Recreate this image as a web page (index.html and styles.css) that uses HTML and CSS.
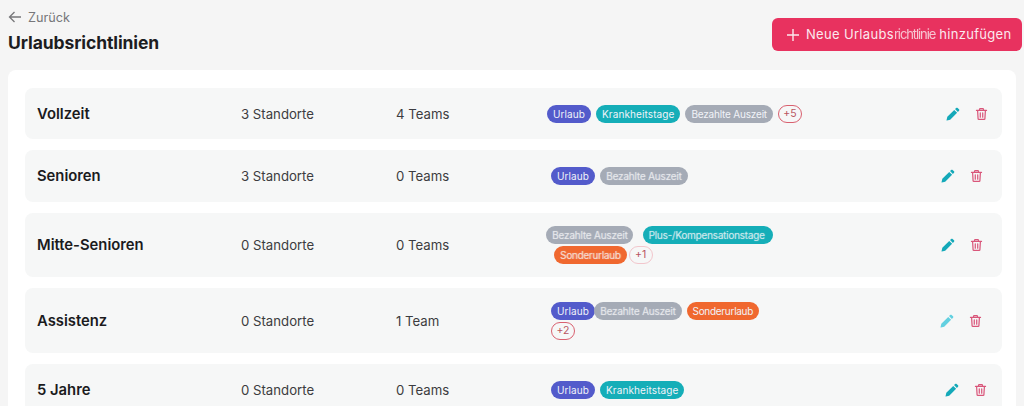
FILE: index.html
```html
<!DOCTYPE html>
<html lang="de">
<head>
<meta charset="utf-8">
<title>Urlaubsrichtlinien</title>
<link rel="stylesheet" href="styles.css">
</head>
<body>
<svg class="sprite" width="0" height="0" aria-hidden="true">
  <symbol id="pencil" viewBox="0 0 16 16"><path fill="currentColor" d="M11.6 1.1c.5-.5 1.2-.5 1.7 0l1.6 1.6c.5.5.5 1.2 0 1.7l-1.3 1.3-3.3-3.3zM9.4 3.3l3.3 3.3-7.9 7.9L1 15.4c-.3.1-.5-.1-.4-.4l.9-3.8z"/></symbol>
  <symbol id="trash" viewBox="0 0 16 16"><path fill="none" stroke="currentColor" stroke-width="1.5" stroke-linecap="round" stroke-linejoin="round" d="M1.8 3.6h12.4M5.6 3.4V2.2c0-.5.4-.9.9-.9h3c.5 0 .9.4.9.9v1.2M3.2 3.8l.6 9.9c0 .6.5 1 1 1h6.4c.5 0 1-.4 1-1l.6-9.9M6.5 6.6v5.4M9.5 6.6v5.4"/></symbol>
</svg>
<header class="top">
  <div class="heading">
    <a class="back"><svg class="back-icon" viewBox="0 0 14 14"><path d="M13 7H1.5M6.5 2 1.5 7l5 5" fill="none" stroke="currentColor" stroke-width="1.3"/></svg>Zurück</a>
    <h1>Urlaubsrichtlinien</h1>
  </div>
  <button class="add"><svg class="add-icon" viewBox="0 0 12 12"><path d="M6 0v12M0 6h12" stroke="currentColor" stroke-width="1.4"/></svg><span>Neue Urlaubs<span class="squeeze">richtlinie</span> hinzufügen</span></button>
</header>
<main class="card">
  <section class="row row-one">
    <div class="name">Vollzeit</div><div class="cell">3 Standorte</div><div class="cell">4 Teams</div>
    <div class="tags"><span class="tag blue">Urlaub</span><span class="tag teal">Krankheitstage</span><span class="tag grey">Bezahlte Auszeit</span><span class="more">+5</span></div>
    <div class="actions"><svg class="pencil"><use href="#pencil"/></svg><svg class="trash"><use href="#trash"/></svg></div>
  </section>
  <section class="row row-two">
    <div class="name">Senioren</div><div class="cell">3 Standorte</div><div class="cell">0 Teams</div>
    <div class="tags"><span class="tag blue">Urlaub</span><span class="tag grey blur">Bezahlte Auszeit</span></div>
    <div class="actions"><svg class="pencil"><use href="#pencil"/></svg><svg class="trash"><use href="#trash"/></svg></div>
  </section>
  <section class="row row-three">
    <div class="name">Mitte-Senioren</div><div class="cell">0 Standorte</div><div class="cell">0 Teams</div>
    <div class="tags"><span class="tag grey blur">Bezahlte Auszeit</span><span class="tag teal blur wide">Plus-/Kompensationstage</span><span class="tag orange blur indent">Sonderurlaub</span><span class="more faded">+1</span></div>
    <div class="actions"><svg class="pencil"><use href="#pencil"/></svg><svg class="trash"><use href="#trash"/></svg></div>
  </section>
  <section class="row row-four">
    <div class="name">Assistenz</div><div class="cell">0 Standorte</div><div class="cell">1 Team</div>
    <div class="tags"><span class="tag blue">Urlaub</span><span class="tag grey blur tuck">Bezahlte Auszeit</span><span class="tag orange">Sonderurlaub</span><span class="more">+2</span></div>
    <div class="actions"><svg class="pencil ghost"><use href="#pencil"/></svg><svg class="trash"><use href="#trash"/></svg></div>
  </section>
  <section class="row row-five">
    <div class="name">5 Jahre</div><div class="cell">0 Standorte</div><div class="cell">0 Teams</div>
    <div class="tags"><span class="tag blue">Urlaub</span><span class="tag teal">Krankheitstage</span></div>
    <div class="actions"><svg class="pencil"><use href="#pencil"/></svg><svg class="trash"><use href="#trash"/></svg></div>
  </section>
</main>
</body>
</html>
```
FILE: styles.css
```css
* { box-sizing: border-box; }
html, body { height: 100%; }
body {
  margin: 0;
  height: 406px;
  overflow: hidden;
  background: #f5f5f5;
  font-family: Inter, "Liberation Sans", sans-serif;
  color: #1d1d1f;
}
.sprite { display: block; }
.top {
  display: flex;
  justify-content: space-between;
  height: 70px;
  padding: 9px 2px 0 8px;
}
.back {
  display: flex;
  align-items: center;
  gap: 6px;
  height: 16px;
  font-size: 12.7px;
  color: #77777a;
}
.back-icon { width: 14px; height: 14px; }
h1 {
  margin: 8px 0 0;
  font-size: 17.5px;
  line-height: 20px;
  font-weight: 700;
  letter-spacing: -0.1px;
}
.add {
  display: flex;
  align-items: center;
  gap: 7px;
  width: 250px;
  height: 33px;
  margin-top: 9px;
  padding: 0 0 0 15px;
  border: 0;
  border-radius: 6px;
  background: #e8325f;
  color: #fbe9ee;
  font: 13px/1 Inter, "Liberation Sans", sans-serif;
  letter-spacing: 0.32px;
  white-space: nowrap;
}
.add-icon { width: 12px; height: 12px; flex: none; }
.squeeze { letter-spacing: -1.1px; opacity: 0.8; }
.card {
  display: flex;
  flex-direction: column;
  gap: 11px;
  height: 336px;
  margin-left: 8px;
  margin-right: 8px;
  padding: 18px 14px 0 17px;
  background: #fff;
  border-radius: 8px 8px 0 0;
}
.row {
  display: grid;
  grid-template-columns: 204px 155px 151px 1fr auto;
  align-items: center;
  flex: none;
  height: 51px;
  padding: 0 14px 0 12px;
  border-radius: 8px;
  background: #f6f7f7;
}
.row-two { height: 52px; grid-template-columns: 204px 155px 155px 1fr auto; padding-right: 19px; }
.row-three { height: 64px; grid-template-columns: 204px 155px 150px 1fr auto; padding-right: 19px; }
.row-four { height: 65px; grid-template-columns: 204px 155px 155px 1fr auto; padding-right: 20px; }
.row-five { height: 52px; grid-template-columns: 204px 155px 155px 1fr auto; padding-right: 15px; }
.name { font-size: 14.8px; font-weight: 600; color: #1b1b1d; }
.cell { font-size: 13.2px; color: #3c3c40; }
.tags {
  display: flex;
  flex-wrap: wrap;
  align-items: center;
  gap: 2px 5px;
  max-width: 232px;
}
.row-one .tags { max-width: 270px; }
.tag {
  height: 18px;
  padding: 0 6px;
  border-radius: 9px;
  font-size: 10px;
  line-height: 18px;
  letter-spacing: 0.1px;
  color: #f1f3f8;
  white-space: nowrap;
}
.blue { background: #535bcb; }
.teal { background: #15aeb8; }
.grey { background: #a5abb6; letter-spacing: -0.2px; }
.orange { background: #f0682f; letter-spacing: -0.28px; }
.blur { color: rgba(244, 245, 248, 0.72); text-shadow: 0.6px 0 1px rgba(255, 255, 255, 0.5); }
.wide { width: 130px; margin-left: 5px; overflow: hidden; letter-spacing: -0.25px; padding: 0 5px; }
.indent { margin-left: 8px; }
.tuck { margin-left: -6px; }
.more {
  display: inline-block;
  width: 24px;
  height: 18px;
  border: 1px solid #d9606f;
  border-radius: 9px;
  font-size: 10.5px;
  line-height: 16px;
  text-align: center;
  color: #b95561;
}
.faded { border-color: #f2c6cc; margin-left: -3px; }
.actions { display: flex; align-items: center; gap: 15px; }
.pencil { width: 14px; height: 14px; color: #14a9b9; }
.ghost { color: #62d0e0; filter: blur(0.6px); }
.trash { width: 13px; height: 14px; color: #d9567a; }
```
